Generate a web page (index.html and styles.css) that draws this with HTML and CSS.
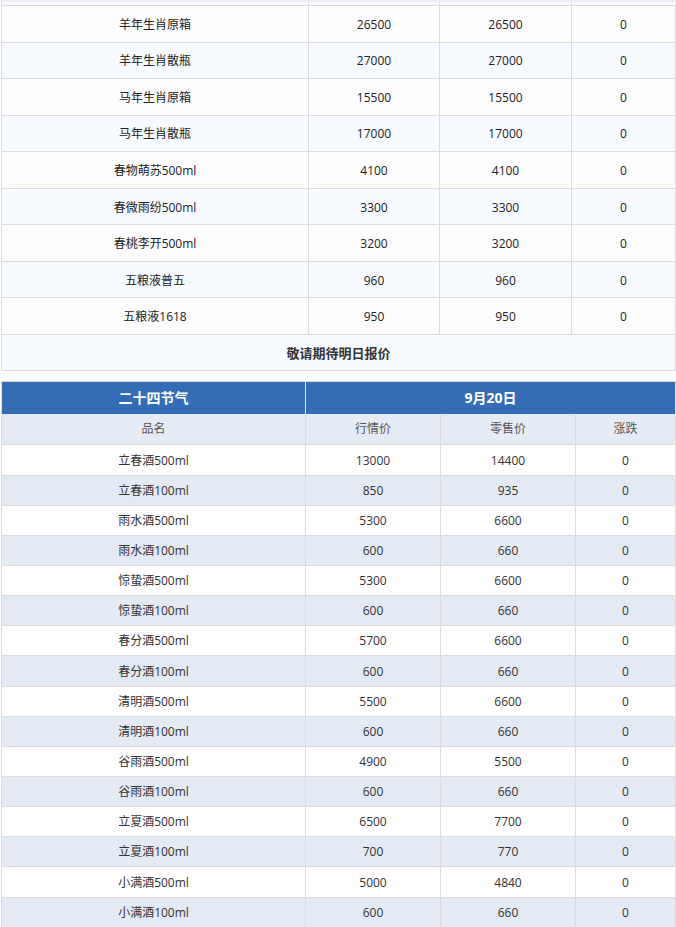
FILE: index.html
```html
<!DOCTYPE html>
<html lang="zh-CN">
<head>
<meta charset="utf-8">
<title>行情价</title>
<link rel="stylesheet" href="styles.css">
</head>
<body>
<div class="page">
  <div class="strip"></div>
  <table class="price-table t1">
    <colgroup><col class="c1"><col class="c2"><col class="c3"><col></colgroup>
    <tbody>
      <tr class="cut alt"><td></td><td></td><td></td><td></td></tr>
      <tr><td>羊年生肖原箱</td><td>26500</td><td>26500</td><td>0</td></tr>
      <tr class="alt"><td>羊年生肖散瓶</td><td>27000</td><td>27000</td><td>0</td></tr>
      <tr><td>马年生肖原箱</td><td>15500</td><td>15500</td><td>0</td></tr>
      <tr class="alt"><td>马年生肖散瓶</td><td>17000</td><td>17000</td><td>0</td></tr>
      <tr><td>春物萌苏500ml</td><td>4100</td><td>4100</td><td>0</td></tr>
      <tr class="alt"><td>春微雨纷500ml</td><td>3300</td><td>3300</td><td>0</td></tr>
      <tr><td>春桃李开500ml</td><td>3200</td><td>3200</td><td>0</td></tr>
      <tr class="alt"><td>五粮液普五</td><td>960</td><td>960</td><td>0</td></tr>
      <tr><td>五粮液1618</td><td>950</td><td>950</td><td>0</td></tr>
      <tr class="alt note"><td colspan="4">敬请期待明日报价</td></tr>
    </tbody>
  </table>

  <table class="price-table t2">
    <colgroup><col class="c1"><col class="c2"><col class="c3"><col></colgroup>
    <thead>
      <tr class="head"><th>二十四节气</th><th colspan="3">9月20日</th></tr>
      <tr class="sub"><th>品名</th><th>行情价</th><th>零售价</th><th>涨跌</th></tr>
    </thead>
    <tbody>
      <tr><td>立春酒500ml</td><td>13000</td><td>14400</td><td>0</td></tr>
      <tr class="alt"><td>立春酒100ml</td><td>850</td><td>935</td><td>0</td></tr>
      <tr><td>雨水酒500ml</td><td>5300</td><td>6600</td><td>0</td></tr>
      <tr class="alt"><td>雨水酒100ml</td><td>600</td><td>660</td><td>0</td></tr>
      <tr><td>惊蛰酒500ml</td><td>5300</td><td>6600</td><td>0</td></tr>
      <tr class="alt"><td>惊蛰酒100ml</td><td>600</td><td>660</td><td>0</td></tr>
      <tr><td>春分酒500ml</td><td>5700</td><td>6600</td><td>0</td></tr>
      <tr class="alt"><td>春分酒100ml</td><td>600</td><td>660</td><td>0</td></tr>
      <tr><td>清明酒500ml</td><td>5500</td><td>6600</td><td>0</td></tr>
      <tr class="alt"><td>清明酒100ml</td><td>600</td><td>660</td><td>0</td></tr>
      <tr><td>谷雨酒500ml</td><td>4900</td><td>5500</td><td>0</td></tr>
      <tr class="alt"><td>谷雨酒100ml</td><td>600</td><td>660</td><td>0</td></tr>
      <tr><td>立夏酒500ml</td><td>6500</td><td>7700</td><td>0</td></tr>
      <tr class="alt"><td>立夏酒100ml</td><td>700</td><td>770</td><td>0</td></tr>
      <tr><td>小满酒500ml</td><td>5000</td><td>4840</td><td>0</td></tr>
      <tr class="alt"><td>小满酒100ml</td><td>600</td><td>660</td><td>0</td></tr>
    </tbody>
  </table>
</div>
</body>
</html>
```

FILE: styles.css
```css
html, body {
  margin: 0;
  padding: 0;
  background: #ffffff;
  overflow: hidden;
}

body {
  font-family: "Open Sans", "Noto Sans CJK SC", sans-serif;
  font-size: 12px;
  color: #222222;
}

.page {
  width: 676px;
}

.strip {
  height: 2px;
  background: #eceef3;
}

.price-table {
  table-layout: fixed;
  border-collapse: separate;
  border-spacing: 0;
  width: 675px;
  margin-left: 1px;
  border-left: 1px solid #dcdcdc;
}

.price-table td,
.price-table th {
  padding: 0;
  text-align: center;
  vertical-align: middle;
  border-right: 1px solid #dcdcdc;
  border-bottom: 1px solid #dcdcdc;
  white-space: nowrap;
  overflow: hidden;
  line-height: 16px;
}

/* table 1 */
.t1 .c1 { width: 307px; }
.t1 .c2 { width: 131px; }
.t1 .c3 { width: 132px; }

.t1 tr { height: 36.56px; background: #fdfdfd; }
.t1 tr.alt { background: #f7faff; }
.t1 tr.cut { height: 4px; }
.t1 tr.cut td { line-height: 0; }
.t1 td { color: #222222; padding-top: 2px; }
.t1 tr.cut td { padding-top: 0; }
.t1 .note td {
  font-size: 13px;
  font-weight: 700;
  color: #333333;
  padding-top: 0;
}

/* table 2 */
.t2 {
  margin-top: 10px;
  border-top: 1px solid #dcdcdc;
}
.t2 .c1 { width: 304px; }
.t2 .c2 { width: 135px; }
.t2 .c3 { width: 135px; }

.t2 .head { height: 32px; background: #346db5; }
.t2 .head th {
  color: #ffffff;
  font-size: 14px;
  font-weight: 700;
  border-bottom: 0;
  border-right-color: #dfe5ee;
}

.t2 .sub { height: 31px; background: #e5ebf4; }
.t2 .sub th {
  font-weight: 400;
  color: #555555;
  font-size: 12px;
}

.t2 tbody tr { height: 30.15px; background: #ffffff; }
.t2 tbody tr.alt { background: #e4eaf4; }
.t2 td { color: #333333; padding-top: 1px; }
```
